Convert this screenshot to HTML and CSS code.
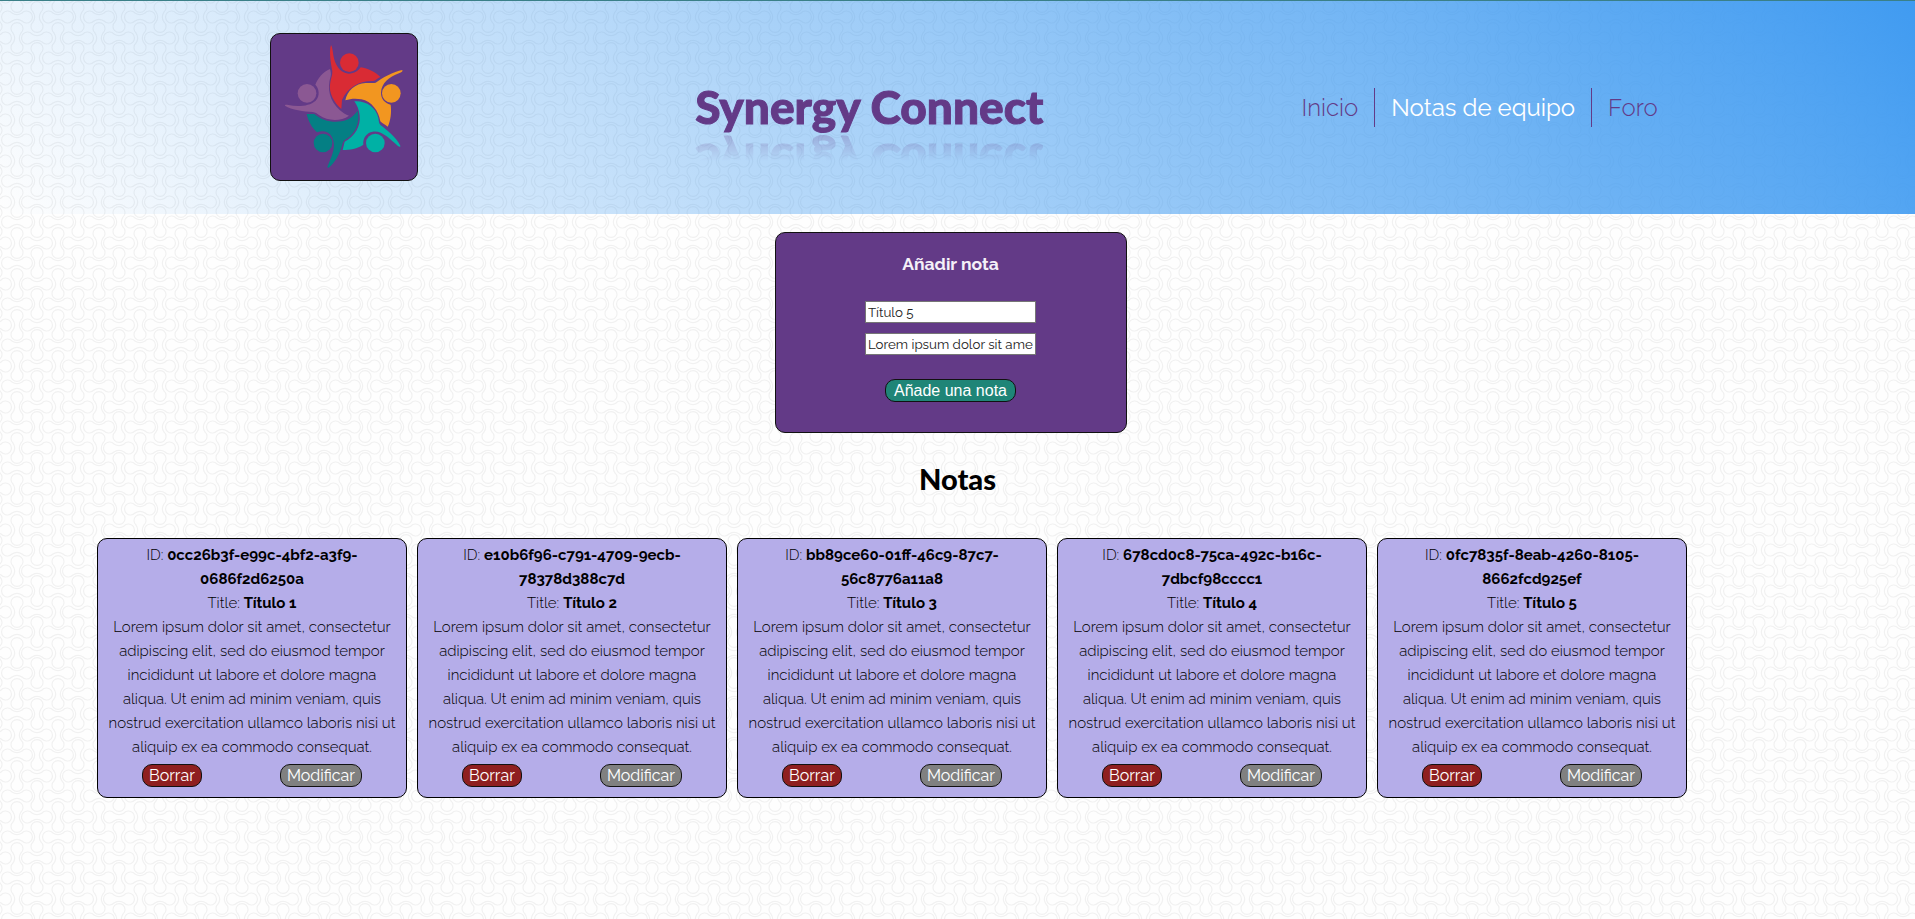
FILE: index.html
```html
<!DOCTYPE html>
<html lang="es">
<head>
<meta charset="utf-8">
<title>Synergy Connect</title>
<link rel="stylesheet" href="styles.css">
</head>
<body>
<header class="header">
  <a class="logo" href="#" aria-label="Synergy Connect">
    <svg viewBox="34 42 438 438" aria-hidden="true">
      <g fill="#d92b34"><circle cx="269" cy="128" r="28"/><path d="M214 75C218 81 219 92 221 106C225 132 240 160 267 161C284 161 296 153 303 142C325 145 348 157 362 171C354 174 350 181 341 183C301 181 263 202 247 240L245 267C224 248 205 220 212 187C213 177 219 165 218 154C214 132 207 95 214 75Z"/></g>
      <g fill="#f29620"><circle cx="395" cy="220" r="28"/><path d="M428 150C430 154 426 157 418 160C388 171 365 190 364 218C364 237 375 248 393 254C396 276 393 302 384 320C377 314 368 310 362 304C357 274 336 243 305 238C288 235 272 236 257 241C262 213 287 190 318 189C330 188 340 191 348 188C366 175 402 154 428 150Z"/></g>
      <g fill="#00b1a5"><circle cx="347" cy="369" r="28"/><path d="M284 244C317 241 349 261 356 294C358 304 357 310 363 316C381 330 410 352 422 377C423 382 418 380 414 377C391 357 366 330 339 335C320 338 309 355 311 374C293 386 270 390 249 390L255 365C286 350 304 317 300 286C298 270 293 256 284 244Z"/></g>
      <g fill="#047f84"><circle cx="190" cy="369" r="28"/><path d="M141 282L164 282C185 301 216 309 246 304C266 300 282 289 294 272C302 305 288 341 258 358C252 361 250 366 248 373C242 398 226 430 207 443C202 444 203 440 205 436C214 414 226 389 222 367C219 347 207 335 190 334C183 334 178 335 172 337C157 324 145 302 141 282Z"/></g>
      <g fill="#8b5893"><circle cx="142" cy="220" r="28"/><path d="M211 147C213 154 215 161 213 169C201 207 210 244 240 270C249 278 258 284 268 287C242 306 203 303 179 286C171 280 168 277 159 276C134 274 95 270 76 257C75 253 81 254 86 255C113 260 148 260 168 242C182 227 178 205 167 194C174 175 190 156 211 147Z"/></g>
    </svg>
  </a>
  <h1 class="brand">Synergy Connect</h1>
  <nav class="nav">
    <a class="nav-link" href="#">Inicio</a>
    <a class="nav-link active" href="#">Notas de equipo</a>
    <a class="nav-link" href="#">Foro</a>
  </nav>
</header>
<main>
  <form class="note-form">
    <h3 class="form-title">Añadir nota</h3>
    <input class="field" type="text" aria-label="Título" value="Título 5">
    <input class="field" type="text" aria-label="Contenido" value="Lorem ipsum dolor sit amet, consectetur">
    <button class="button add" type="button">Añade una nota</button>
  </form>
  <h2 class="section-title">Notas</h2>
  <section class="notes">
    <article class="note">
      <p>ID: <b>0cc26b3f-e99c-4bf2-a3f9-0686f2d6250a</b></p>
      <p>Title: <b>Título 1</b></p>
      <p>Lorem ipsum dolor sit amet, consectetur adipiscing elit, sed do eiusmod tempor incididunt ut labore et dolore magna aliqua. Ut enim ad minim veniam, quis nostrud exercitation ullamco laboris nisi ut aliquip ex ea commodo consequat.</p>
      <div class="actions"><button class="button delete" type="button">Borrar</button><button class="button edit" type="button">Modificar</button></div>
    </article>
    <article class="note">
      <p>ID: <b>e10b6f96-c791-4709-9ecb-78378d388c7d</b></p>
      <p>Title: <b>Título 2</b></p>
      <p>Lorem ipsum dolor sit amet, consectetur adipiscing elit, sed do eiusmod tempor incididunt ut labore et dolore magna aliqua. Ut enim ad minim veniam, quis nostrud exercitation ullamco laboris nisi ut aliquip ex ea commodo consequat.</p>
      <div class="actions"><button class="button delete" type="button">Borrar</button><button class="button edit" type="button">Modificar</button></div>
    </article>
    <article class="note">
      <p>ID: <b>bb89ce60-01ff-46c9-87c7-56c8776a11a8</b></p>
      <p>Title: <b>Título 3</b></p>
      <p>Lorem ipsum dolor sit amet, consectetur adipiscing elit, sed do eiusmod tempor incididunt ut labore et dolore magna aliqua. Ut enim ad minim veniam, quis nostrud exercitation ullamco laboris nisi ut aliquip ex ea commodo consequat.</p>
      <div class="actions"><button class="button delete" type="button">Borrar</button><button class="button edit" type="button">Modificar</button></div>
    </article>
    <article class="note">
      <p>ID: <b>678cd0c8-75ca-492c-b16c-7dbcf98cccc1</b></p>
      <p>Title: <b>Título 4</b></p>
      <p>Lorem ipsum dolor sit amet, consectetur adipiscing elit, sed do eiusmod tempor incididunt ut labore et dolore magna aliqua. Ut enim ad minim veniam, quis nostrud exercitation ullamco laboris nisi ut aliquip ex ea commodo consequat.</p>
      <div class="actions"><button class="button delete" type="button">Borrar</button><button class="button edit" type="button">Modificar</button></div>
    </article>
    <article class="note">
      <p>ID: <b>0fc7835f-8eab-4260-8105-8662fcd925ef</b></p>
      <p>Title: <b>Título 5</b></p>
      <p>Lorem ipsum dolor sit amet, consectetur adipiscing elit, sed do eiusmod tempor incididunt ut labore et dolore magna aliqua. Ut enim ad minim veniam, quis nostrud exercitation ullamco laboris nisi ut aliquip ex ea commodo consequat.</p>
      <div class="actions"><button class="button delete" type="button">Borrar</button><button class="button edit" type="button">Modificar</button></div>
    </article>
  </section>
</main>
</body>
</html>
```

FILE: styles.css
```css
* { box-sizing: border-box; }

body {
  margin: 0;
  color: #000;
  font: 300 15px/24px Raleway, Lato, sans-serif;
  background: #fefefe url("data:image/svg+xml,%3Csvg xmlns='http://www.w3.org/2000/svg' width='41' height='41' viewBox='0 0 41 41'%3E%3Cdefs%3E%3Cpath id='d' d='M-5 -4C-2 -2 2 -2 5 -4A6 6 0 1 1 5 4C2 2 -2 2 -5 4A6 6 0 1 1 -5 -4Z'/%3E%3C/defs%3E%3Cg fill='none' stroke='%23f1f1f1' stroke-width='1.2'%3E%3Cuse href='%23d' x='37' y='38'/%3E%3Cuse href='%23d' x='-4' y='38'/%3E%3Cuse href='%23d' x='37' y='-3'/%3E%3Cuse href='%23d' x='-4' y='-3'/%3E%3Cuse href='%23d' x='17' y='17'/%3E%3Cuse href='%23d' transform='translate(17 38) rotate(90)'/%3E%3Cuse href='%23d' transform='translate(17 -3) rotate(90)'/%3E%3Cuse href='%23d' transform='translate(37 17) rotate(90)'/%3E%3Cuse href='%23d' transform='translate(-4 17) rotate(90)'/%3E%3C/g%3E%3C/svg%3E");
}

.header {
  display: flex;
  align-items: center;
  justify-content: space-between;
  padding: 32px 12.6% 33px 14.1%;
  border-top: 1px solid #3a8088;
  background: linear-gradient(45deg, #409bf100, #409bf1);
}

.logo {
  display: block;
  width: 148px;
  height: 148px;
  margin-right: 35px;
  border: 1px solid #111;
  border-radius: 10px;
  background: #633a87;
}

.logo svg { display: block; }

.brand {
  margin: 0;
  color: #633a87;
  font-family: Lato, sans-serif;
  font-size: 46px;
  font-weight: 900;
  line-height: 56px;
  -webkit-text-stroke: 1px #633a87;
  -webkit-box-reflect: below -2px linear-gradient(transparent 50%, #0004);
}

.nav { display: flex; }

.nav-link {
  padding: 0 16px;
  color: #633a87;
  font-size: 24px;
  line-height: 39px;
  text-decoration: none;
}

.nav-link + .nav-link { border-left: 1px solid #633a87; }

.nav-link.active { color: #fff; font-weight: 400; }

.note-form {
  display: flex;
  flex-direction: column;
  align-items: center;
  width: 352px;
  margin: 18px 0 0 calc(50% - 183px);
  padding: 19px 0 30px;
  border: 1px solid #111;
  border-radius: 10px;
  background: #633a87;
}

.form-title {
  margin: 0 0 25px;
  color: #f5f0f8;
  font-weight: 700;
}

.field {
  width: 171px;
  height: 22px;
  margin-bottom: 10px;
  padding: 1px 2px;
  border: 1px solid #767676;
  background: #fff;
  color: #222;
  font-family: Raleway, Lato, sans-serif;
}

.button {
  height: 23px;
  padding: 0 6px;
  border: 1px solid #111;
  border-radius: 10px;
  color: #fff;
  font: 400 16px Raleway, Lato, sans-serif;
  line-height: 20px;
}

.add {
  margin-top: 14px;
  padding: 0 8px;
  background: #1f8577;
  font-family: "Liberation Sans", Arial, sans-serif;
}

.delete { background: #8f1f20; }

.edit { background: #808080; }

.section-title {
  margin: 28px 0 41px;
  font-family: Lato, sans-serif;
  font-size: 29px;
  font-weight: 900;
  line-height: 36px;
  text-align: center;
}

.notes {
  display: flex;
  flex-wrap: wrap;
  gap: 10px;
  padding: 0 97px 40px;
}

.note {
  width: 310px;
  padding: 4px 5px 10px;
  border: 1px solid #000;
  border-radius: 10px;
  background: #b5ade9;
  text-align: center;
}

.note p { margin: 0; padding: 0 3px; }

.note b { font-weight: 700; }

.actions {
  display: flex;
  justify-content: space-around;
  margin-top: 5px;
}
```
